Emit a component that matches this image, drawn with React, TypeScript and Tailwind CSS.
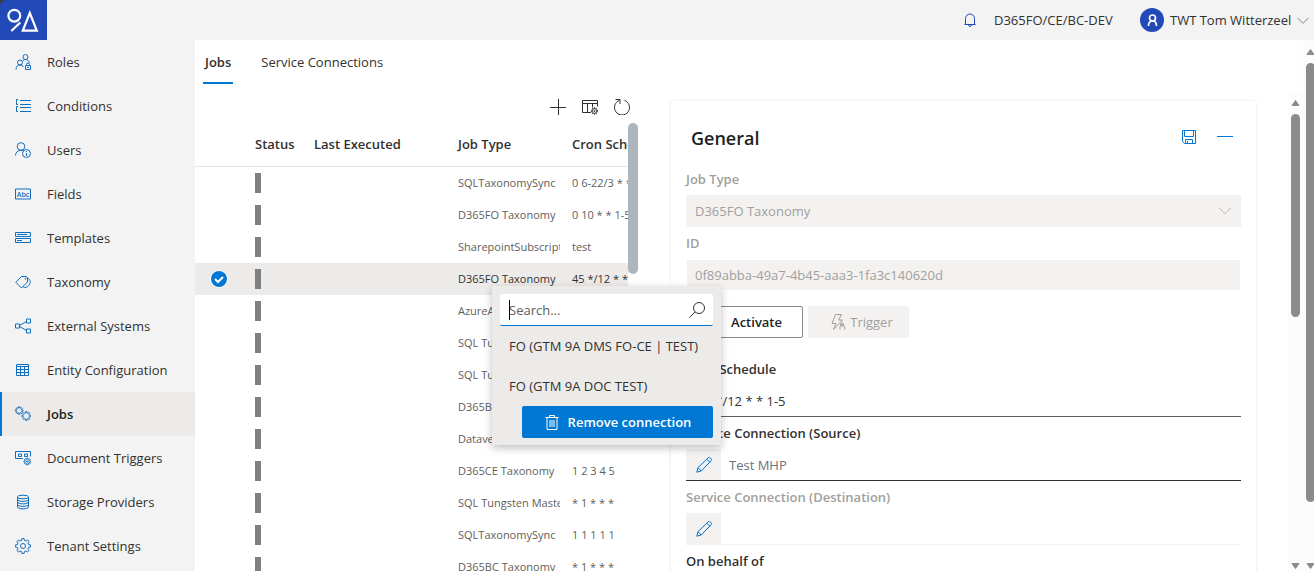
import type { ReactNode } from 'react';

interface NavItem {
  label: string;
  icon: ReactNode;
  active?: boolean;
}

interface Job {
  type: string;
  cron: string;
  selected?: boolean;
}

function gearPath(cx: number, cy: number, outer: number, inner: number, teeth: number) {
  const step = (Math.PI * 2) / teeth;
  const points: string[] = [];
  for (let i = 0; i < teeth; i++) {
    const a = i * step - Math.PI / 2;
    const corners: [number, number][] = [
      [inner, -0.3],
      [outer, -0.2],
      [outer, 0.2],
      [inner, 0.3],
    ];
    corners.forEach(([r, offset]) => {
      const angle = a + offset * step;
      points.push(`${(cx + r * Math.cos(angle)).toFixed(2)} ${(cy + r * Math.sin(angle)).toFixed(2)}`);
    });
  }
  return `M${points.join('L')}Z`;
}

function Icon({ children, className = 'size-4' }: { children: ReactNode; className?: string }) {
  return (
    <svg viewBox="0 0 16 16" fill="none" stroke="currentColor" strokeWidth="1" className={`shrink-0 ${className}`} aria-hidden="true">
      {children}
    </svg>
  );
}

const navItems: NavItem[] = [
  {
    label: 'Roles',
    icon: (
      <Icon>
        <circle cx="10.5" cy="3" r="2.5" />
        <circle cx="5" cy="8.5" r="2.5" />
        <path d="M1 15.5c0-3 1.7-4.5 4-4.5 1.6 0 2.8.7 3.5 2M7.5 7.5c.6-1.3 1.7-2 3-2 2.1 0 3.4 1.3 3.8 3.2" />
        <path d="M10.5 11.5h5v4h-5zM11.5 11.5v-1a1.5 1.5 0 0 1 3 0v1M12 13.5h2" />
      </Icon>
    ),
  },
  {
    label: 'Conditions',
    icon: (
      <Icon>
        <path d="M5 2.5h11M5 6.5h11M5 9.5h11M5 13.5h11M3 1.5H1.5v5H3M3 8.5H1.5v5H3" />
      </Icon>
    ),
  },
  {
    label: 'Users',
    icon: (
      <Icon>
        <circle cx="6" cy="4.5" r="3.8" />
        <path d="M.5 13.5c0-3 2.2-5.2 5.5-5.2 1 0 1.8.2 2.5.6" />
        <circle cx="11.5" cy="11.5" r="4" />
        <path d="M11.5 11v3M11.5 9v1" />
      </Icon>
    ),
  },
  {
    label: 'Fields',
    icon: (
      <Icon>
        <path d="M.5 3h15v10H.5z" />
        <text x="8" y="10.500" textAnchor="middle" fontSize="7" fill="currentColor" stroke="none" fontWeight="600">
          Abc
        </text>
      </Icon>
    ),
  },
  {
    label: 'Templates',
    icon: (
      <Icon>
        <path d="M.5 2.5h15v4H.5zM.5 8.5h15v4H.5zM2 4.5h10M2 10.5h5" />
      </Icon>
    ),
  },
  {
    label: 'Taxonomy',
    icon: (
      <Icon>
        <path d="M6.500 2.500h5l1 1.500v4l-6 6L.8 8.300zM12.500 4c2.500 1 3.500 3.800 2.200 6-1.100 2.300-3 3.600-5.200 3.600L8 12.500" />
        <circle cx="10.5" cy="4.8" r=".5" />
      </Icon>
    ),
  },
  {
    label: 'External Systems',
    icon: (
      <Icon>
        <path d="M.5 6h4v4h-4zM11.5 1h4v4h-4zM11.5 11h4v4h-4zM4.5 7.5l7-4M4.5 8.5l7 4" />
      </Icon>
    ),
  },
  {
    label: 'Entity Configuration',
    icon: (
      <Icon>
        <path d="M1.5 2.5h12v11h-12zM1.5 4.5h12M1.5 7.5h12M1.5 10.5h12M5.5 4.5v9M9.5 4.5v9" />
      </Icon>
    ),
  },
  {
    label: 'Jobs',
    active: true,
    icon: (
      <Icon>
        <path d={gearPath(4.2, 4.5, 3.8, 2.6, 8)} />
        <path d={gearPath(11.3, 10, 4.4, 3.1, 8)} />
      </Icon>
    ),
  },
  {
    label: 'Document Triggers',
    icon: (
      <Icon>
        <path d="M8 8.5H.5v-7h15v5M3.5 4h3v2.5h-3zM9.5 4h3v2.5h-3z" />
        <path d={gearPath(12.3, 11.5, 3.4, 2.3, 8)} />
        <circle cx="12.3" cy="11.5" r=".7" />
      </Icon>
    ),
  },
  {
    label: 'Storage Providers',
    icon: (
      <Icon>
        <ellipse cx="8" cy="3" rx="5.5" ry="1.8" />
        <path d="M2.5 3v10c0 1 2.5 1.9 5.5 1.9s5.5-.9 5.5-1.9V3M2.5 5.5c0 1 2.5 1.9 5.5 1.9s5.5-.9 5.5-1.9M2.5 8c0 1 2.5 1.9 5.5 1.9s5.5-.9 5.5-1.9M2.5 10.5c0 1 2.5 1.9 5.5 1.9s5.5-.9 5.5-1.9" />
      </Icon>
    ),
  },
  {
    label: 'Tenant Settings',
    icon: (
      <Icon>
        <path d={gearPath(8, 8, 7.5, 5.8, 8)} />
        <circle cx="8" cy="8" r="2.5" />
      </Icon>
    ),
  },
];

const jobs: Job[] = [
  { type: 'SQLTaxonomySync', cron: '0 6-22/3 * * *' },
  { type: 'D365FO Taxonomy', cron: '0 10 * * 1-5' },
  { type: 'SharepointSubscription', cron: 'test' },
  { type: 'D365FO Taxonomy', cron: '45 */12 * * 1-5', selected: true },
  { type: 'AzureAD Sync', cron: '' },
  { type: 'SQL Tungsten', cron: '' },
  { type: 'SQL Tungsten', cron: '' },
  { type: 'D365BC Taxonomy', cron: '' },
  { type: 'Dataverse Taxonomy', cron: '' },
  { type: 'D365CE Taxonomy', cron: '1 2 3 4 5' },
  { type: 'SQL Tungsten Master', cron: '* 1 * * *' },
  { type: 'SQLTaxonomySync', cron: '1 1 1 1 1' },
  { type: 'D365BC Taxonomy', cron: '* 1 * * *' },
];

function Header() {
  return (
    <header className="flex h-10 shrink-0 items-center bg-[#f3f3f3]">
      <a href="#" aria-label="Home" className="h-10 w-[47px] bg-[#2249b8]">
        <svg viewBox="0 0 47 40" fill="none" stroke="#fff" strokeWidth="2.2" className="h-10 w-[47px]">
          <path d="M0 0h6a6 6 0 0 0-6 6z" fill="#3c3c3c" stroke="none" />
          <circle cx="14.3" cy="15.7" r="5.9" />
          <path d="M20.3 22.5l-9 8.500M29.800 13L36.800 30.700H22.800z" />
        </svg>
      </a>
      <button type="button" aria-label="Notifications" className="ml-auto text-[#2249b8]">
        <Icon>
          <path d="M2.5 12.5h11M3.5 12.5V6.5a4.500 4.500 0 0 1 9 0v6M6.500 12.500a1.500 2 0 0 0 3 0" />
        </Icon>
      </button>
      <span className="ml-4 w-[146px]">D365FO/CE/BC-DEV</span>
      <button type="button" className="flex items-center pr-[5px]">
        <span className="flex size-6 items-center justify-center rounded-full bg-[#2249b8] text-white">
          <svg viewBox="0 0 16 16" fill="none" stroke="currentColor" strokeWidth="1.7" className="size-4">
            <circle cx="8.5" cy="6" r="3" />
            <path d="M4.5 14c0-3 1.5-5 4-5s4 2 4 5" />
          </svg>
        </span>
        <span className="ml-[6px] w-[127px] text-left whitespace-nowrap">TWT Tom Witterzeel</span>
        <Icon className="size-3 text-[#605e5c]">
          <path d="M.5 5L8 12.5 15.5 5" />
        </Icon>
      </button>
    </header>
  );
}

function Sidebar() {
  return (
    <nav className="w-[195px] shrink-0 overflow-hidden bg-[#f3f3f3]">
      {navItems.map((item) => (
        <a
          key={item.label}
          href="#"
          className={
            item.active
              ? 'flex h-11 items-center gap-4 border-l-2 border-[#0078d4] bg-[#edebe9] pl-[13px] font-semibold text-[#201f1e]'
              : 'flex h-11 items-center gap-4 border-l-2 border-transparent pl-[13px]'
          }
        >
          <span className="text-[#106ebe]">{item.icon}</span>
          {item.label}
        </a>
      ))}
    </nav>
  );
}

function Tabs() {
  return (
    <div role="tablist" className="flex h-11 shrink-0 gap-6 pl-2">
      <button type="button" role="tab" aria-selected="true" className="border-b-2 border-[#0078d4] px-0.5 pt-0.5 font-semibold">
        Jobs
      </button>
      <button type="button" role="tab" aria-selected="false" className="border-b-2 border-transparent px-1 pt-0.5">
        Service Connections
      </button>
    </div>
  );
}

function JobsTable() {
  return (
    <section className="w-[475px] shrink-0">
      <div className="flex w-[443px] justify-end">
        <button type="button" aria-label="Add" className="flex size-8 items-center justify-center">
          <Icon>
            <path d="M8.5 0v16M0 8.5h16" />
          </Icon>
        </button>
        <button type="button" aria-label="Column options" className="flex size-8 items-center justify-center">
          <Icon>
            <path d="M9 13.5H.5v-12h15v6M.5 4.5h15M5.5 4.5v9M10.5 4.5v4" />
            <path d={gearPath(12.5, 12, 3.2, 2.1, 8)} />
            <circle cx="12.5" cy="12" r=".6" />
          </Icon>
        </button>
        <button type="button" aria-label="Refresh" className="flex size-8 items-center justify-center">
          <Icon>
            <path d="M5.5 1.400A7.500 7.500 0 1 0 10.500 1.400M1.500.5h4.500V5" />
          </Icon>
        </button>
      </div>
      <div className="flex">
        <div className="min-w-0 flex-1 overflow-hidden">
          <table className="w-[540px] table-fixed text-left whitespace-nowrap">
            <colgroup>
              <col className="w-[52px]" />
              <col className="w-[59px]" />
              <col className="w-[144px]" />
              <col className="w-[114px]" />
              <col />
            </colgroup>
            <thead>
              <tr className="h-11 shadow-[inset_0_-1px_#e6e6e6]">
                <td />
                <th className="pb-0.5 pl-2 font-semibold">Status</th>
                <th className="pb-0.5 pl-2 font-semibold">Last Executed</th>
                <th className="pb-0.5 pl-2 font-semibold">Job Type</th>
                <th className="pb-0.5 pl-2 font-semibold">Cron Schedule</th>
              </tr>
            </thead>
            <tbody className="text-[11px] text-[#605e5c]">
              {jobs.map((job, index) => (
                <tr key={index} className={job.selected ? 'h-8 bg-[#edebe9] text-[#323130]' : 'h-8'}>
                  <td className="pl-4">
                    {job.selected && (
                      <label className="relative block size-4">
                        <input type="checkbox" defaultChecked aria-label="Select job" className="block size-4 appearance-none rounded-full bg-[#0078d4] ring-1 ring-white" />
                        <svg viewBox="0 0 16 16" fill="none" stroke="#fff" strokeWidth="2" className="pointer-events-none absolute inset-0">
                          <path d="M4 8l3 3 5-5" />
                        </svg>
                      </label>
                    )}
                  </td>
                  <td className="pl-2">
                    <div className="h-5 w-[6px] bg-[#808080]" />
                  </td>
                  <td />
                  <td className="pr-1 pl-2">
                    <div className="overflow-hidden">{job.type}</div>
                  </td>
                  <td className="pl-2">{job.cron}</td>
                </tr>
              ))}
            </tbody>
          </table>
        </div>
        <div className="mr-8 h-[151px] w-[10px] shrink-0 rounded-full bg-[#adb5bd]" />
      </div>
    </section>
  );
}

function PencilIcon() {
  return (
    <Icon>
      <path d="M.8 15.200l1.200-4.500L12 .9c1-.8 2.200-.3 2.800.3.6.6 1 1.800.2 2.700L5.200 14zM2 10.700l3.200 3.300M10.800 2.200l3.100 3.100" />
    </Icon>
  );
}

function DetailsCard() {
  const label = 'flex h-8 items-center font-semibold';
  return (
    <section className="mr-8 min-w-0 flex-1 self-start pt-[10px]">
      <div className="ml-px rounded-sm px-[15px] pb-4 shadow-[0_0_3px_rgba(0,0,0,0.13)]">
        <div className="flex h-[62px] items-center gap-5 pt-3 pr-2 pl-[5px] text-[#0078d4]">
          <h2 className="mr-auto text-lg font-semibold text-[#201f1e]">General</h2>
          <button type="button" aria-label="Save">
            <Icon>
              <path d="M1.500.5h13v13h-11l-2-2zM3.500.5v6h9v-6M4.500 13.500v-4h7v4M6.500 11v2.500" />
            </Icon>
          </button>
          <button type="button" aria-label="Collapse">
            <Icon>
              <path d="M0 6.500h16" />
            </Icon>
          </button>
        </div>

        <label htmlFor="job-type" className={`${label} text-[#a19f9d]`}>
          Job Type
        </label>
        <div className="relative">
          <select id="job-type" disabled className="block h-8 w-full appearance-none bg-[#f3f2f1] px-[9px] text-[#a19f9d] opacity-100">
            <option>D365FO Taxonomy</option>
          </select>
          <Icon className="pointer-events-none absolute top-[10px] right-[10px] size-3 text-[#a19f9d]">
            <path d="M.5 4L8 11.5 15.5 4" />
          </Icon>
        </div>

        <label htmlFor="job-id" className={`${label} text-[#a19f9d]`}>
          ID
        </label>
        <input id="job-id" disabled defaultValue="0f89abba-49a7-4b45-aaa3-1fa3c140620d" className="block h-8 w-full border border-white bg-[#f3f2f1] px-2 text-[#a19f9d]" />

        <div className="my-[15px] flex gap-[5px]">
          <button type="button" className="flex h-8 w-[117px] items-center justify-end rounded-xs border border-[#8a8886] pr-5 font-semibold text-[#201f1e]">
            Activate
          </button>
          <button type="button" disabled className="flex h-8 w-[101px] items-center justify-center gap-1 rounded-xs bg-[#f3f2f1] pl-[6px] text-[#a19f9d]">
            <Icon>
              <path d="M5.5.5h6L8.5 6h4l-9 9.5 2.5-6H2zM10 15.5v-3a2 2 0 0 1 4 0l1 3" />
              <circle cx="12" cy="10.5" r="1.5" />
            </Icon>
            Trigger
          </button>
        </div>

        <label htmlFor="cron" className={label}>
          Cron Schedule
        </label>
        <input id="cron" defaultValue="45 */12 * * 1-5" className="block h-8 w-full border-b border-[#605e5c] px-[11px]" />

        <label htmlFor="source" className={label}>
          Service Connection (Source)
        </label>
        <div className="flex h-8 border-b border-[#323130]">
          <button type="button" aria-label="Edit source" className="flex w-[35px] items-center justify-center bg-[#f3f2f1] text-[#0078d4]">
            <PencilIcon />
          </button>
          <input id="source" defaultValue="Test MHP" className="min-w-0 flex-1 px-2 text-[#69727a]" />
        </div>

        <label htmlFor="destination" className={`${label} text-[#a19f9d]`}>
          Service Connection (Destination)
        </label>
        <div className="flex h-8 border-b border-[#f3f2f1]">
          <button type="button" aria-label="Edit destination" className="flex w-[35px] items-center justify-center bg-[#f3f2f1] text-[#106ebe]">
            <PencilIcon />
          </button>
          <input id="destination" disabled className="min-w-0 flex-1 px-2" />
        </div>

        <label htmlFor="behalf" className={label}>
          On behalf of
        </label>
        <input id="behalf" className="block h-8 w-full border-b border-[#605e5c] px-2" />
      </div>
    </section>
  );
}

function ConnectionMenu() {
  return (
    <div className="absolute top-[246px] left-[297px] w-[229px] bg-[#edebe9] px-2 pt-2 pb-[7px] shadow-[0_3px_8px_rgba(0,0,0,0.25)]">
      <div className="relative flex h-8 items-center rounded-xs border-b border-[#0078d4] bg-white pr-2 text-[#323130]">
        <span className="absolute left-[9px] h-5 w-px bg-black" />
        <input type="text" aria-label="Search connections" placeholder="Search..." className="min-w-0 flex-1 pl-[9px] placeholder:text-[#605e5c]" />
        <Icon>
          <circle cx="10" cy="6" r="5.5" />
          <path d="M6 10L.5 15.5" />
        </Icon>
      </div>
      <button type="button" className="block h-10 w-full pl-[9px] text-left whitespace-nowrap">
        FO (GTM 9A DMS FO-CE | TEST)
      </button>
      <button type="button" className="block h-10 w-full pl-[9px] text-left whitespace-nowrap">
        FO (GTM 9A DOC TEST)
      </button>
      <button type="button" className="ml-auto flex h-8 w-[191px] items-center justify-center gap-2 rounded-xs bg-[#0078d4] font-semibold text-white">
        <Icon>
          <path d="M1.5 3.5h13M3 3.5v12h10v-12M5.5 3.5v-2h5v2M6 6v7M8 6v7M10 6v7" />
        </Icon>
        Remove connection
      </button>
    </div>
  );
}

function Arrow({ down = false }: { down?: boolean }) {
  return (
    <svg viewBox="0 0 9 8" className={down ? 'h-2 w-[9px] shrink-0 rotate-180' : 'h-2 w-[9px] shrink-0'} aria-hidden="true">
      <path d="M4.5 1.5L8 6.5H1z" fill="#8b8b8b" stroke="#8b8b8b" strokeLinejoin="round" />
    </svg>
  );
}

export default function App() {
  return (
    <div className="flex h-screen flex-col overflow-hidden bg-white font-['Open_Sans',sans-serif] text-[13px] leading-5 text-[#323130]">
      <Header />
      <div className="flex min-h-0 flex-1">
        <Sidebar />
        <main className="relative flex min-w-0 flex-1 flex-col">
          <Tabs />
          <div className="flex min-h-0 flex-1 overflow-hidden pt-[7px]">
            <JobsTable />
            <DetailsCard />
            <div className="flex w-[15px] shrink-0 flex-col bg-[#fcfcfc] pt-2 pl-[3px]">
              <Arrow />
              <div className="mt-[7px] mb-auto h-[43%] w-[9px] rounded-full bg-[#8b8b8b]" />
              <Arrow down />
              <div className="h-px" />
            </div>
          </div>
          <ConnectionMenu />
        </main>
        <div className="flex w-[11px] shrink-0 flex-col overflow-hidden bg-[#fcfcfc] pt-2 pl-[3px]">
          <Arrow />
          <div className="mt-[7px] mb-auto h-[84%] w-[9px] rounded-full bg-[#8b8b8b]" />
          <Arrow down />
          <div className="h-px" />
        </div>
      </div>
    </div>
  );
}
